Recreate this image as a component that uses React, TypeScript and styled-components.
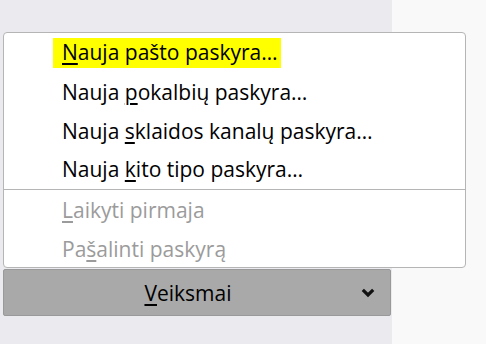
import React from 'react';
import styled, { createGlobalStyle } from 'styled-components';

const GlobalStyle = createGlobalStyle`
  html, body {
    margin: 0;
    padding: 0;
    background: #f9f9f9;
    font-family: 'Open Sans', 'Noto Sans', sans-serif;
  }
  * {
    box-sizing: border-box;
  }
`;

const Page = styled.div`
  display: grid;
  grid-template-columns: 392px 1fr;
  height: 344px;
  overflow: hidden;
`;

const Sidebar = styled.aside`
  background: #ebeaef;
  padding: 269px 1px 0 3px;
`;

const ActionArea = styled.div`
  position: relative;
`;

const Menu = styled.ul`
  position: absolute;
  left: 0;
  bottom: calc(100% + 1px);
  width: 463px;
  margin: 0;
  padding: 0;
  list-style: none;
  background: #fff;
  border: 1px solid #b5b5b5;
  border-radius: 4px;
  z-index: 2;
`;

const Item = styled.li<{ $disabled?: boolean }>`
  display: flex;
  align-items: center;
  height: 38.7px;
  padding: 3px 0 0 58px;
  font-size: 21px;
  color: ${(p) => (p.$disabled ? '#9b9b9b' : '#000')};
  white-space: nowrap;
`;

const Label = styled.span<{ $focused?: boolean }>`
  line-height: 29px;
  ${(p) =>
    p.$focused &&
    `
    background: #ffff00;
    margin-left: -9px;
    padding: 0 3px 1px 9px;
    margin-top: -1px;
  `}

  u {
    text-underline-offset: 3px;
    text-decoration-thickness: 2px;
  }
`;

const Separator = styled.li`
  height: 1px;
  margin: 1px 0 0;
  background: #b5b5b5;
`;

const ActionButton = styled.button`
  position: relative;
  display: flex;
  align-items: center;
  justify-content: center;
  width: 100%;
  height: 47px;
  padding: 0 18px 0 0;
  background: #a9a9a9;
  border: 1px solid #999;
  border-radius: 2px;
  font-family: inherit;
  font-size: 21px;
  color: #000;

  u {
    text-underline-offset: 3px;
    text-decoration-thickness: 2px;
  }
`;

const Chevron = styled.svg`
  position: absolute;
  right: 15px;
  top: 50%;
  margin-top: -5px;
`;

const items = [
  { pre: '', key: 'N', post: 'auja pašto paskyra…', focused: true },
  { pre: 'Nauja ', key: 'p', post: 'okalbių paskyra…' },
  { pre: 'Nauja ', key: 's', post: 'klaidos kanalų paskyra…' },
  { pre: 'Nauja ', key: 'k', post: 'ito tipo paskyra…' },
];

const disabledItems = [
  { pre: '', key: 'L', post: 'aikyti pirmaja' },
  { pre: 'Pa', key: 'š', post: 'alinti paskyrą' },
];

export default function App() {
  return (
    <>
      <GlobalStyle />
      <Page>
        <Sidebar>
          <ActionArea>
            <Menu>
              {items.map((it) => (
                <Item key={it.post}>
                  <Label $focused={it.focused}>
                    {it.pre}
                    <u>{it.key}</u>
                    {it.post}
                  </Label>
                </Item>
              ))}
              <Separator />
              {disabledItems.map((it) => (
                <Item key={it.post} $disabled>
                  <Label>
                    {it.pre}
                    <u>{it.key}</u>
                    {it.post}
                  </Label>
                </Item>
              ))}
            </Menu>
            <ActionButton>
              <span>
                <u>V</u>eiksmai
              </span>
              <Chevron width="14" height="10" viewBox="0 0 14 10">
                <path d="M1.8 1.8 L7 7 L12.2 1.8" fill="none" stroke="#111" strokeWidth="3.2" />
              </Chevron>
            </ActionButton>
          </ActionArea>
        </Sidebar>
        <div />
      </Page>
    </>
  );
}
